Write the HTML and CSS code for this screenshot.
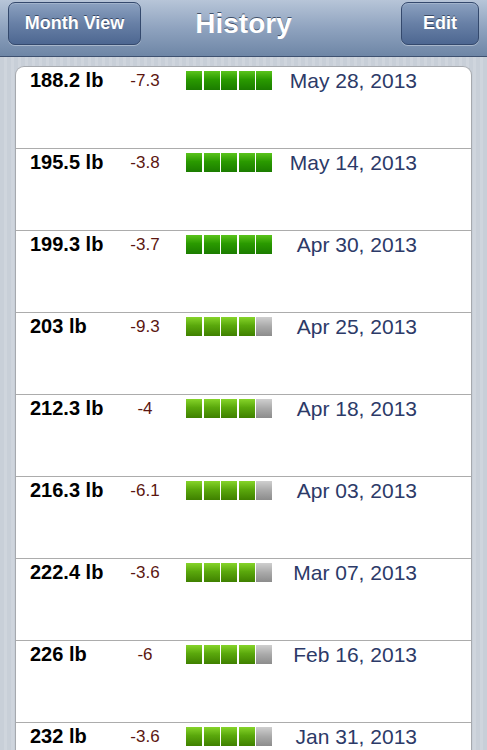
FILE: index.html
```html
<!DOCTYPE html>
<html lang="en">
<head>
    <meta charset="UTF-8">
    <meta name="viewport" content="width=device-width, initial-scale=1.0">
    <title>History</title>
    <link rel="stylesheet" href="styles.css">
</head>
<body>
    <div class="navbar">
        <button class="navButton monthButton">Month View</button>
        <h1 class="navTitle">History</h1>
        <button class="navButton editButton">Edit</button>
    </div>
    <div class="content">
        <div class="historyTable">
            <div class="entry">
                <div class="entryLine">
                    <span class="weight">188.2 lb</span>
                    <span class="change">-7.3</span>
                    <span class="score full"><i></i><i></i><i></i><i></i><i></i></span>
                    <span class="date">May 28, 2013</span>
                </div>
            </div>
            <div class="entry">
                <div class="entryLine">
                    <span class="weight">195.5 lb</span>
                    <span class="change">-3.8</span>
                    <span class="score full"><i></i><i></i><i></i><i></i><i></i></span>
                    <span class="date">May 14, 2013</span>
                </div>
            </div>
            <div class="entry">
                <div class="entryLine">
                    <span class="weight">199.3 lb</span>
                    <span class="change">-3.7</span>
                    <span class="score full"><i></i><i></i><i></i><i></i><i></i></span>
                    <span class="date">Apr 30, 2013</span>
                </div>
            </div>
            <div class="entry">
                <div class="entryLine">
                    <span class="weight">203 lb</span>
                    <span class="change">-9.3</span>
                    <span class="score"><i></i><i></i><i></i><i></i><i class="off"></i></span>
                    <span class="date">Apr 25, 2013</span>
                </div>
            </div>
            <div class="entry">
                <div class="entryLine">
                    <span class="weight">212.3 lb</span>
                    <span class="change">-4</span>
                    <span class="score"><i></i><i></i><i></i><i></i><i class="off"></i></span>
                    <span class="date">Apr 18, 2013</span>
                </div>
            </div>
            <div class="entry">
                <div class="entryLine">
                    <span class="weight">216.3 lb</span>
                    <span class="change">-6.1</span>
                    <span class="score"><i></i><i></i><i></i><i></i><i class="off"></i></span>
                    <span class="date">Apr 03, 2013</span>
                </div>
            </div>
            <div class="entry">
                <div class="entryLine">
                    <span class="weight">222.4 lb</span>
                    <span class="change">-3.6</span>
                    <span class="score"><i></i><i></i><i></i><i></i><i class="off"></i></span>
                    <span class="date">Mar 07, 2013</span>
                </div>
            </div>
            <div class="entry">
                <div class="entryLine">
                    <span class="weight">226 lb</span>
                    <span class="change">-6</span>
                    <span class="score"><i></i><i></i><i></i><i></i><i class="off"></i></span>
                    <span class="date">Feb 16, 2013</span>
                </div>
            </div>
            <div class="entry">
                <div class="entryLine">
                    <span class="weight">232 lb</span>
                    <span class="change">-3.6</span>
                    <span class="score"><i></i><i></i><i></i><i></i><i class="off"></i></span>
                    <span class="date">Jan 31, 2013</span>
                </div>
            </div>
        </div>
    </div>
</body>
</html>
```

FILE: styles.css
```css
html, body {
    height: 750px;
    overflow: hidden;
}
body {
    margin: 0;
    font-family: "Liberation Sans", Arial, sans-serif;
    background: repeating-linear-gradient(90deg, #c8cfd8 0px, #c8cfd8 4px, #cfd5dd 4px, #cfd5dd 7px);
}
.navbar {
    height: 54px;
    padding: 2px 8px 0 8px;
    display: grid;
    grid-template-columns: 1fr auto 1fr;
    align-items: start;
    background: linear-gradient(#b7c5d8, #8fa3bf 50%, #6e86a6);
    border-bottom: 1px solid #3e5170;
    box-sizing: content-box;
}
.navButton {
    height: 43px;
    padding: 0 14px;
    font-family: "Liberation Sans", Arial, sans-serif;
    font-size: 18px;
    font-weight: bold;
    color: white;
    text-shadow: 0 -1px 0 rgba(30, 45, 70, 0.7);
    background: linear-gradient(#8ba1c0, #6880a6 50%, #4d6791);
    border: 1px solid #34496d;
    border-radius: 7px;
    box-shadow: 0 1px 0 rgba(255, 255, 255, 0.35), inset 0 1px 0 rgba(255, 255, 255, 0.2);
}
.monthButton {
    width: 133px;
    justify-self: start;
}
.editButton {
    width: 78px;
    justify-self: end;
}
.navTitle {
    margin: 6px 0 0 0;
    font-size: 28px;
    font-weight: bold;
    color: white;
    text-shadow: 0 -1px 0 rgba(40, 55, 80, 0.8);
}
.content {
    padding: 9px 15px 0 15px;
}
.historyTable {
    background: white;
    border: 1px solid #a6a9ae;
    border-bottom: none;
    border-radius: 9px 9px 0 0;
}
.entry {
    height: 81px;
    border-bottom: 1px solid #acacac;
}
.entryLine {
    height: 27px;
    display: grid;
    grid-template-columns: 84px 62px 96px 145px;
    align-items: center;
    padding-left: 14px;
}
.weight {
    font-size: 20px;
    font-weight: bold;
    color: #000;
}
.change {
    text-align: center;
    font-size: 17px;
    color: #5b1610;
}
.score {
    display: flex;
    gap: 1.5px;
    height: 19px;
    margin-left: 10px;
    width: 86px;
}
.score i {
    flex: 1;
    background: linear-gradient(#86d42a, #5aa80c 45%, #3f8000);
}
.score.full i {
    background: linear-gradient(#5bc41c, #2a9a00 45%, #1b7c00);
}
.score i.off {
    background: linear-gradient(#cfcfcf, #a9a9a9 50%, #8c8c8c);
}
.date {
    text-align: right;
    font-size: 21px;
    color: #2c3a68;
}
```
